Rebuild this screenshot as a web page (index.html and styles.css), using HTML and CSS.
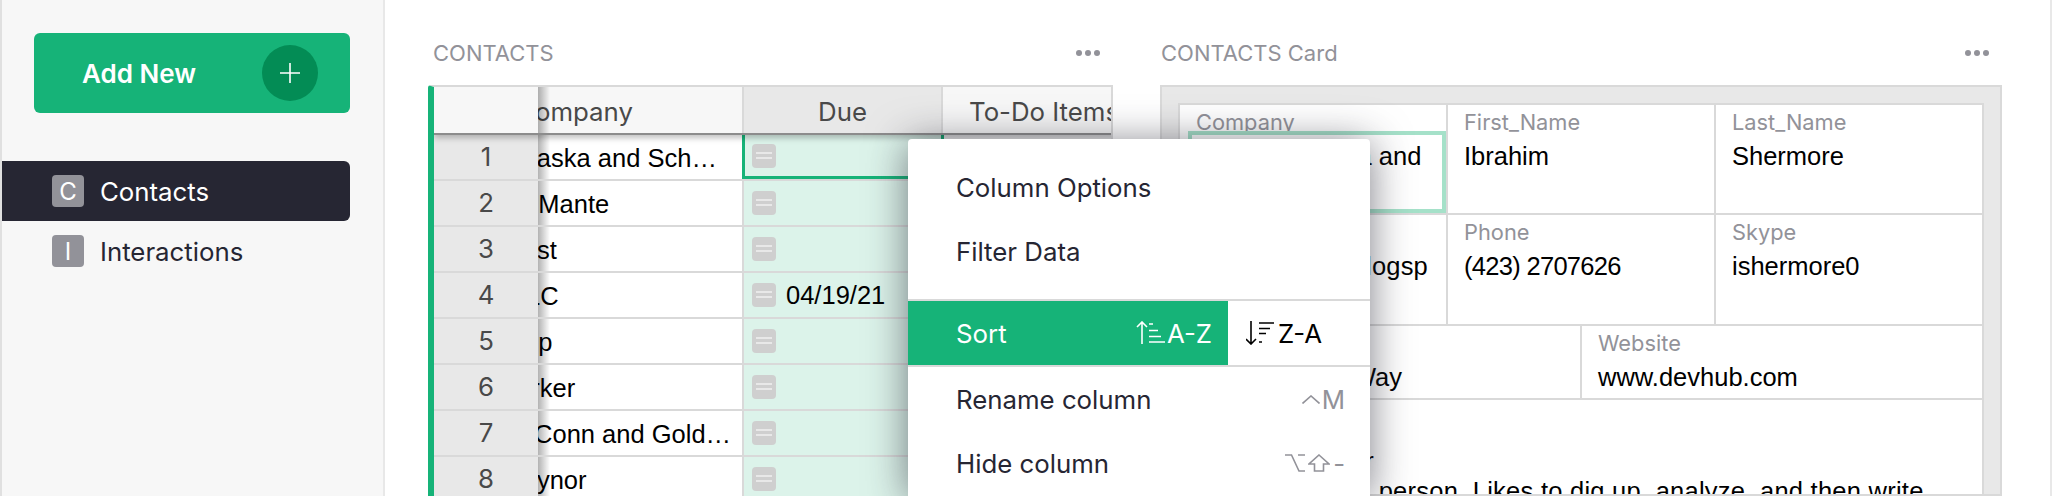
FILE: index.html
```html
<!DOCTYPE html>
<html>
  <head>
    <meta charset="utf-8">
    <title>Contacts</title>
    <link rel="stylesheet" href="styles.css">
  </head>
  <body>
    <div class="sidebar">
      <div class="add-new">
        <span>Add New</span>
        <span class="add-circle">
          <svg width="20" height="20" viewBox="0 0 20 20"><path d="M10 0V20M0 10H20" stroke="#fff" stroke-width="1.6" fill="none"/></svg>
        </span>
      </div>
      <div class="page-list">
        <div class="page active"><span class="page-icon">C</span>Contacts</div>
        <div class="page"><span class="page-icon">I</span>Interactions</div>
      </div>
    </div>

    <div class="main">
      <div class="panel table-panel">
        <div class="panel-title">
          <span>CONTACTS</span>
          <span class="dots"><i></i><i></i><i></i></span>
        </div>
        <div class="grid">
          <div class="grid-head">
            <div class="num"></div>
            <div class="company">Company</div>
            <div class="head-due">Due</div>
            <div class="head-todo">To-Do Items</div>
          </div>
          <div class="row">
            <div class="num">1</div>
            <div class="company"><span class="clip">Dietrich, Alaska and Schmidt</span></div>
            <div class="due selected"><span class="chip"></span></div>
          </div>
          <div class="row">
            <div class="num">2</div>
            <div class="company"><span class="clip">Schneider-Mante</span></div>
            <div class="due"><span class="chip"></span></div>
          </div>
          <div class="row">
            <div class="num">3</div>
            <div class="company"><span class="clip">Bruen, Ernst</span></div>
            <div class="due"><span class="chip"></span></div>
          </div>
          <div class="row">
            <div class="num">4</div>
            <div class="company"><span class="clip">Waelchi LLC</span></div>
            <div class="due"><span class="chip"></span>04/19/21</div>
          </div>
          <div class="row">
            <div class="num">5</div>
            <div class="company"><span class="clip">Dach Group</span></div>
            <div class="due"><span class="chip"></span></div>
          </div>
          <div class="row">
            <div class="num">6</div>
            <div class="company"><span class="clip">Green, Parker</span></div>
            <div class="due"><span class="chip"></span></div>
          </div>
          <div class="row">
            <div class="num">7</div>
            <div class="company"><span class="clip">Hermann, Conn and Goldner</span></div>
            <div class="due"><span class="chip"></span></div>
          </div>
          <div class="row">
            <div class="num">8</div>
            <div class="company"><span class="clip">Bednar Raynor</span></div>
            <div class="due"><span class="chip"></span></div>
          </div>
        </div>
      </div>

      <div class="panel card-panel">
        <div class="panel-title">
          <span>CONTACTS Card</span>
          <span class="dots"><i></i><i></i><i></i></span>
        </div>
        <div class="card">
          <div class="card-inner">
            <div class="card-row row-tall">
              <div class="field focus">
                <div class="label">Company</div>
                <div class="value">Dietrich, Alaska and Schmidt</div>
              </div>
              <div class="field">
                <div class="label">First_Name</div>
                <div class="value">Ibrahim</div>
              </div>
              <div class="field">
                <div class="label">Last_Name</div>
                <div class="value">Shermore</div>
              </div>
            </div>
            <div class="card-row row-tall2">
              <div class="field">
                <div class="label">Email</div>
                <div class="value break">ishermore0@blogspot.com</div>
              </div>
              <div class="field">
                <div class="label">Phone</div>
                <div class="value phone">(423) 2707626</div>
              </div>
              <div class="field">
                <div class="label">Skype</div>
                <div class="value">ishermore0</div>
              </div>
            </div>
            <div class="card-row row-short">
              <div class="field">
                <div class="label">Address</div>
                <div class="value">6521 Morrow Way</div>
              </div>
              <div class="field">
                <div class="label">Website</div>
                <div class="value">www.devhub.com</div>
              </div>
            </div>
            <div class="field notes">
              <div class="label">Notes</div>
              <div class="value">Policy Reporter<br>A true outgoing person. Likes to dig up, analyze, and then write about data.</div>
            </div>
          </div>
        </div>
      </div>
    </div>

    <div class="menu">
      <div class="menu-item">Column Options</div>
      <div class="menu-item">Filter Data</div>
      <div class="menu-gap"></div>
      <div class="sort-row">
        <div class="sort-asc">
          <span>Sort</span>
          <span class="sort-key">
            <svg width="30" height="24" viewBox="0 0 30 24" fill="none" stroke="#fff" stroke-width="1.6">
              <path d="M7 23V1M2 6L7 1L12 6"/>
              <path d="M14 3H18M14 9.5H23M14 15.5H26M14 21H30"/>
            </svg>
            A-Z
          </span>
        </div>
        <div class="sort-desc">
          <svg width="29" height="24" viewBox="0 0 29 24" fill="none" stroke="#000" stroke-width="1.6">
            <path d="M5 0V23M0 18L5 23L10 18"/>
            <path d="M13 2H28M13 7.5H24M13 12.5H20M13 21H16"/>
          </svg>
          Z-A
        </div>
      </div>
      <div class="menu-item">
        <span>Rename column</span>
        <span class="shortcut short-gap">
          <svg width="18" height="9" viewBox="0 0 18 9" fill="none" stroke="#929299" stroke-width="1.6"><path d="M0.5 8.5L9 1L17.5 8.5"/></svg>
          M
        </span>
      </div>
      <div class="menu-item">
        <span>Hide column</span>
        <span class="shortcut">
          <svg width="20" height="18" viewBox="0 0 20 18" fill="none" stroke="#929299" stroke-width="1.6"><path d="M0 1H6.5L14 17H20M13 1H20"/></svg>
          <svg width="22" height="18" viewBox="0 0 22 18" fill="none" stroke="#929299" stroke-width="1.6"><path d="M11 1L21 10H15.5V17H6.5V10H1Z"/></svg>
          -
        </span>
      </div>
    </div>
  </body>
</html>
```

FILE: styles.css
```css
html, body {
  margin: 0;
  height: 100%;
  overflow: hidden;
}
body {
  display: flex;
  box-sizing: border-box;
  border-left: 2px solid #e0e0e0;
  border-right: 2px solid #e8e8e8;
  font-family: Inter, sans-serif;
  font-size: 25.8px;
  color: #262633;
  background: #fff;
}

/* left column */
.sidebar {
  width: 348px;
  flex: none;
  background: #f7f7f7;
  border-right: 2px solid #e8e8e8;
  padding: 33px 33px 0 0;
}
.add-new {
  margin-left: 32px;
  height: 80px;
  background: #16b378;
  border-radius: 6px;
  color: #fff;
  font-weight: 600;
  font-size: 26px;
  display: flex;
  align-items: center;
  justify-content: space-between;
  padding: 0 32px 0 48px;
}
.add-circle {
  width: 56px;
  height: 56px;
  border-radius: 50%;
  background: #038c55;
  display: flex;
  align-items: center;
  justify-content: center;
}
.page-list {
  margin-top: 48px;
}
.page {
  height: 60px;
  display: flex;
  align-items: center;
  padding-left: 50px;
  gap: 16px;
}
.page.active {
  background: #262633;
  color: #fff;
  border-radius: 0 6px 6px 0;
}
.page-icon {
  width: 32px;
  height: 32px;
  border-radius: 4px;
  background: #929299;
  color: #fff;
  font-size: 24px;
  display: flex;
  align-items: center;
  justify-content: center;
}

/* sections */
.main {
  flex: 1;
  display: flex;
  gap: 47px;
  padding: 33px 48px 0 43px;
  min-width: 0;
}
.panel {
  display: flex;
  flex-direction: column;
}
.table-panel {
  width: 685px;
}
.card-panel {
  width: 842px;
}
.panel-title {
  height: 40px;
  margin-bottom: 12px;
  display: flex;
  align-items: center;
  justify-content: space-between;
  color: #929299;
  font-size: 22px;
  padding-right: 13px;
}
.table-panel .panel-title {
  padding-left: 5px;
}
.card-panel .panel-title {
  padding-left: 1px;
}
.dots {
  display: flex;
  gap: 3px;
}
.dots i {
  width: 6px;
  height: 6px;
  border-radius: 50%;
  background: #929299;
}

/* grid */
.grid {
  flex: 1;
  overflow: hidden;
  box-sizing: border-box;
  border-top: 2px solid #d9d9d9;
  border-right: 2px solid #d9d9d9;
  border-left: 6px solid #16b378;
  border-top-left-radius: 3px;
}
.grid-head, .row {
  display: flex;
  width: 900px;
}
.grid-head {
  height: 48px;
  line-height: 50px;
  text-align: center;
  background: #f7f7f7;
  color: #494949;
  position: relative;
  z-index: 2;
  box-sizing: border-box;
  border-bottom: 2px solid #8c8c8c;
  box-shadow: 0 3px 6px rgba(0, 0, 0, .25);
}
.grid-head .num {
  background: #f7f7f7;
  height: 46px;
}
.grid-head .company {
  padding: 0;
  overflow: visible;
}
.head-due {
  width: 197px;
  background: #e8e8e8;
  border-right: 2px solid #d9d9d9;
}
.head-todo {
  width: 200px;
  box-sizing: border-box;
  padding-left: 26px;
  text-align: left;
  white-space: nowrap;
}
.row {
  height: 46px;
  box-sizing: border-box;
  border-bottom: 2px solid #d9d9d9;
}
.num {
  width: 104px;
  flex: none;
  background: #e8e8e8;
  color: #494949;
  text-align: center;
  line-height: 44px;
  position: relative;
  z-index: 1;
}
.num::after {
  content: "";
  position: absolute;
  top: 0;
  bottom: 0;
  left: 100%;
  width: 12px;
  background: linear-gradient(to right, rgba(0, 0, 0, .3), rgba(0, 0, 0, 0));
}
.row .num {
  height: 46px;
  border-bottom: 2px solid #d9d9d9;
  box-sizing: border-box;
}
.company {
  width: 337px;
  flex: none;
  margin-left: -131px;
  box-sizing: border-box;
  padding: 0 8px;
  border-right: 2px solid #d9d9d9;
}
.clip {
  display: block;
  overflow: hidden;
  white-space: nowrap;
  text-overflow: ellipsis;
  font-family: "Liberation Sans", sans-serif;
  font-size: 25.5px;
  line-height: 46px;
  color: #000;
}
.due {
  width: 199px;
  flex: none;
  box-sizing: border-box;
  background: #dcf3ea;
  display: flex;
  align-items: center;
  gap: 10px;
  padding-left: 8px;
  font-family: "Liberation Sans", sans-serif;
  font-size: 25.5px;
  color: #000;
  border-right: 2px solid #d9d9d9;
}
.due.selected {
  margin-left: -2px;
  width: 202px;
  padding-left: 7px;
  border: 3px solid #16b378;
  border-top: 0;
}
.chip {
  width: 24px;
  height: 24px;
  border-radius: 4px;
  background: #cfcfcf;
  position: relative;
  flex: none;
}
.chip::before {
  content: "";
  position: absolute;
  left: 4px;
  right: 4px;
  top: 8px;
  height: 3px;
  border-top: 2px solid #e8e8e8;
  border-bottom: 2px solid #e8e8e8;
}

/* card */
.card {
  flex: 1;
  overflow: hidden;
  box-sizing: border-box;
  background: #e8e8e8;
  border: 2px solid #d9d9d9;
  padding: 16px 16px 0;
}
.card-inner {
  background: #fff;
  border: 2px solid #d9d9d9;
  height: 100%;
}
.card-row {
  display: flex;
  box-sizing: border-box;
  border-bottom: 2px solid #d9d9d9;
}
.row-tall {
  height: 110px;
}
.row-tall2 {
  height: 111px;
}
.row-short {
  height: 74px;
}
.field {
  flex: 1;
  box-sizing: border-box;
  padding: 3px 16px 0;
  border-right: 2px solid #d9d9d9;
  position: relative;
  min-width: 0;
}
.field:last-child {
  border-right: 0;
}
.row-short .field:first-child {
  flex: none;
  width: 402px;
}
.focus::after {
  content: "";
  position: absolute;
  left: 8px;
  right: 0;
  top: 26px;
  bottom: 0;
  border: 4px solid #a5e1c9;
}
.label {
  color: #929299;
  font-size: 21.8px;
  line-height: 28px;
}
.value {
  font-family: "Liberation Sans", sans-serif;
  font-size: 25.5px;
  line-height: 29px;
  color: #000;
  margin-top: 6px;
}
.phone {
  letter-spacing: -0.7px;
}
.break {
  word-break: break-all;
  letter-spacing: 0.2px;
}
.notes {
  border-right: 0;
}
.notes .value {
  margin-top: 15px;
  line-height: 30px;
  letter-spacing: 0.25px;
}

/* column menu */
.menu {
  position: absolute;
  left: 908px;
  top: 139px;
  bottom: 0;
  width: 462px;
  background: #fff;
  border-radius: 4px 4px 0 0;
  box-shadow: 0 4px 40px rgba(38, 38, 51, .6);
  z-index: 5;
  padding-top: 16px;
  box-sizing: border-box;
}
.menu-item {
  height: 64px;
  display: flex;
  align-items: center;
  justify-content: space-between;
  padding: 0 25px 0 48px;
}
.menu-gap {
  height: 16px;
}
.sort-row {
  display: flex;
  height: 68px;
  box-sizing: border-box;
  border-top: 2px solid #d9d9d9;
  border-bottom: 2px solid #d9d9d9;
}
.sort-asc {
  width: 320px;
  box-sizing: border-box;
  background: #16b378;
  color: #fff;
  display: flex;
  align-items: center;
  justify-content: space-between;
  padding: 0 16px 0 48px;
}
.sort-key, .sort-desc, .shortcut {
  display: flex;
  align-items: center;
}
.sort-key {
  gap: 2px;
}
.sort-desc {
  flex: 1;
  padding-left: 18px;
  gap: 3px;
  color: #000;
}
.shortcut {
  color: #929299;
  gap: 3px;
}
.short-gap {
  gap: 2px;
}
```
